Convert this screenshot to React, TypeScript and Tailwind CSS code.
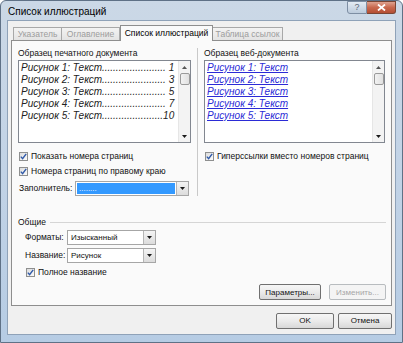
import React from "react";

const font = "font-['Liberation_Sans',Arial,sans-serif]";

function Check({ checked = true }: { checked?: boolean }) {
  return (
    <span className="w-[9px] h-[9px] border border-[#8e8f8f] bg-gradient-to-br from-[#dcdcdc] to-[#fbfbfb] flex items-center justify-center shrink-0">
      {checked && (
        <svg width="7" height="7" viewBox="0 0 7 7">
          <path d="M0.8 3.6 L2.6 5.6 L6.2 0.8" fill="none" stroke="#2f59a8" strokeWidth="1.4" />
        </svg>
      )}
    </span>
  );
}

function Arrow() {
  return (
    <svg width="5" height="3" viewBox="0 0 5 3">
      <path d="M0 0 H5 L2.5 3 Z" fill="#1a1a1a" />
    </svg>
  );
}

function Combo({ w, text, selected = false }: { w: string; text: string; selected?: boolean }) {
  return (
    <div className={`${w} h-[15px] border border-[#a6a6a6] bg-white flex items-stretch`}>
      <div className="flex-1 p-[1px] flex">
        <div
          className={`flex-1 flex items-center pl-[2px] text-[8px] leading-none ${
            selected ? "bg-[#3399ff] text-white" : "text-[#111]"
          }`}
        >
          {text}
        </div>
      </div>
      <div className="w-[12px] border-l border-[#b5b5b5] bg-gradient-to-b from-[#f4f4f4] to-[#dcdcdc] flex items-center justify-center">
        <Arrow />
      </div>
    </div>
  );
}

function ScrollBar() {
  return (
    <div className="w-[12px] bg-[#f3f3f3] border-l border-[#e6e6e6] flex flex-col items-center">
      <div className="h-[12px] flex items-center justify-center">
        <svg width="5" height="3" viewBox="0 0 5 3">
          <path d="M0 3 H5 L2.5 0 Z" fill="#555" />
        </svg>
      </div>
      <div className="w-[10px] h-[12px] border border-[#9a9a9a] rounded-[2px] bg-gradient-to-r from-[#f2f2f2] to-[#e0e0e0]" />
      <div className="flex-1" />
      <div className="h-[11px] flex items-center justify-center">
        <Arrow />
      </div>
    </div>
  );
}

function Btn({ w, children, disabled = false }: { w: string; children: React.ReactNode; disabled?: boolean }) {
  return (
    <div
      className={`${w} h-[16px] rounded-[2px] border flex items-center justify-center text-[8px] ${
        disabled
          ? "border-[#b8bcbf] bg-[#f4f4f4] text-[#a6a6a6]"
          : "border-[#707070] bg-gradient-to-b from-[#f6f6f6] via-[#ebebeb] to-[#d8d8d8] text-[#111]"
      }`}
    >
      {children}
    </div>
  );
}

const leftItems = [
  "Рисунок 1: Текст....................... 1",
  "Рисунок 2: Текст....................... 3",
  "Рисунок 3: Текст....................... 5",
  "Рисунок 4: Текст....................... 7",
  "Рисунок 5: Текст......................10",
];

const webItems = ["Рисунок 1: Текст", "Рисунок 2: Текст", "Рисунок 3: Текст", "Рисунок 4: Текст", "Рисунок 5: Текст"];

export default function App() {
  return (
    <div className={`w-[403px] h-[343px] overflow-hidden bg-white ${font}`}>
      <div className="w-[403px] h-[343px] flex flex-col rounded-t-[6px] border border-[#5f7186] bg-gradient-to-b from-[#cbd8e6] via-[#c2d3e6] to-[#b6cce4]">
        {/* title bar */}
        <div className="h-[19px] flex items-start">
          <span className="ml-[7px] mt-[5px] text-[10px] leading-[12px] text-black">Список иллюстраций</span>
          <div className="ml-auto mr-[6px] flex">
            <div className="w-[20px] h-[13px] border border-[#7d8ea3] rounded-bl-[3px] bg-gradient-to-b from-[#e3ebf3] to-[#bccbdc] flex items-center justify-center text-[9px] text-[#5a6676] leading-none">
              ?
            </div>
            <div className="w-[29px] h-[13px] border border-l-0 border-[#7a4634] rounded-br-[3px] bg-gradient-to-b from-[#dea28f] via-[#c8684d] to-[#b44e33] flex items-center justify-center">
              <svg width="9" height="7" viewBox="0 0 9 7">
                <path d="M1 0.5 L8 6.5 M8 0.5 L1 6.5" stroke="white" strokeWidth="1.8" />
              </svg>
            </div>
          </div>
        </div>

        {/* client area */}
        <div className="mx-[6px] flex-1 bg-[#f0f0f0] border border-[#8fa2b8] flex flex-col">
          {/* tabs */}
          <div className="h-[19px] flex items-end pl-[5px] text-[8.5px] leading-none">
            <div className="w-[49px] h-[13px] border border-b-0 border-[#a8a8a8] bg-gradient-to-b from-[#f3f3f3] to-[#e3e3e3] text-[#9c9c9c] flex items-center justify-center">
              Указатель
            </div>
            <div className="w-[58px] h-[13px] border border-b-0 border-l-0 border-[#a8a8a8] bg-gradient-to-b from-[#f3f3f3] to-[#e3e3e3] text-[#9c9c9c] flex items-center justify-center">
              Оглавление
            </div>
            <div className="relative z-10 -mb-[1px] w-[93px] h-[16px] border border-b-0 border-[#8e8e8e] bg-[#fafafa] text-black flex items-center justify-center pb-[1px]">
              Список иллюстраций
            </div>
            <div className="w-[70px] h-[13px] border border-b-0 border-l-0 border-[#a8a8a8] bg-gradient-to-b from-[#f3f3f3] to-[#e3e3e3] text-[#9c9c9c] flex items-center justify-center">
              Таблица ссылок
            </div>
          </div>

          {/* tab panel */}
          <div className="mx-[3px] border border-[#8e8e8e] bg-[#fafafa] flex flex-col text-[8.5px] leading-[13px] text-[#111]">
            <div className="flex pl-[6px] pb-[16px]">
              {/* left column */}
              <div className="w-[173px] flex flex-col">
                <div className="mt-[6px] h-[13px]">Образец печатного документа</div>
                <div className="h-[83px] border border-[#828790] bg-white flex">
                  <div className="flex-1 pt-[1px] pl-[2px] italic text-[10px] leading-[12px] text-[#222] whitespace-nowrap">
                    {leftItems.map((t) => (
                      <div key={t}>{t}</div>
                    ))}
                  </div>
                  <ScrollBar />
                </div>
                <div className="mt-[7px] h-[13px] flex items-center gap-[3px] pl-[1px]">
                  <Check />
                  <span>Показать номера страниц</span>
                </div>
                <div className="mt-[2px] h-[13px] flex items-center gap-[3px] pl-[1px]">
                  <Check />
                  <span>Номера страниц по правому краю</span>
                </div>
                <div className="mt-[3px] h-[15px] flex items-center">
                  <span className="w-[57px] pl-[1px]">Заполнитель:</span>
                  <Combo w="w-[114px]" text="........" selected />
                </div>
              </div>

              {/* separator */}
              <div className="w-[13px] flex justify-center pt-[7px]">
                <div className="w-px bg-[#c9c9c9]" />
              </div>

              {/* right column */}
              <div className="w-[181px] flex flex-col">
                <div className="mt-[6px] h-[13px]">Образец веб-документа</div>
                <div className="h-[83px] border border-[#828790] bg-white flex">
                  <div className="flex-1 pt-[1px] pl-[2px] italic text-[10px] leading-[12px] text-[#2b2bd6] underline">
                    {webItems.map((t) => (
                      <div key={t}>{t}</div>
                    ))}
                  </div>
                  <ScrollBar />
                </div>
                <div className="mt-[7px] h-[13px] flex items-center gap-[3px] pl-[1px]">
                  <Check />
                  <span>Гиперссылки вместо номеров страниц</span>
                </div>
              </div>
            </div>

            {/* Общие */}
            <div className="mt-[4px] h-[13px] flex items-center pl-[6px] pr-[5px] gap-[4px]">
              <span>Общие</span>
              <div className="flex-1 h-px bg-[#d5d5d5]" />
            </div>
            <div className="mt-[1px] h-[15px] flex items-center pl-[13px]">
              <span className="w-[42px]">Форматы:</span>
              <Combo w="w-[89px]" text="Изысканный" />
            </div>
            <div className="mt-[3px] h-[15px] flex items-center pl-[13px]">
              <span className="w-[42px]">Название:</span>
              <Combo w="w-[89px]" text="Рисунок" />
            </div>
            <div className="mt-[3px] h-[13px] flex items-center gap-[3px] pl-[14px]">
              <Check />
              <span>Полное название</span>
            </div>
            <div className="mt-[5px] mb-[5px] flex justify-end gap-[8px] pr-[5px]">
              <Btn w="w-[62px]">Параметры...</Btn>
              <Btn w="w-[57px]" disabled>
                Изменить...
              </Btn>
            </div>
          </div>

          {/* dialog buttons */}
          <div className="mt-[7px] flex justify-end gap-[4px] pr-[3px]">
            <Btn w="w-[58px]">OK</Btn>
            <Btn w="w-[54px]">Отмена</Btn>
          </div>
        </div>
        <div className="h-[7px]" />
      </div>
    </div>
  );
}
